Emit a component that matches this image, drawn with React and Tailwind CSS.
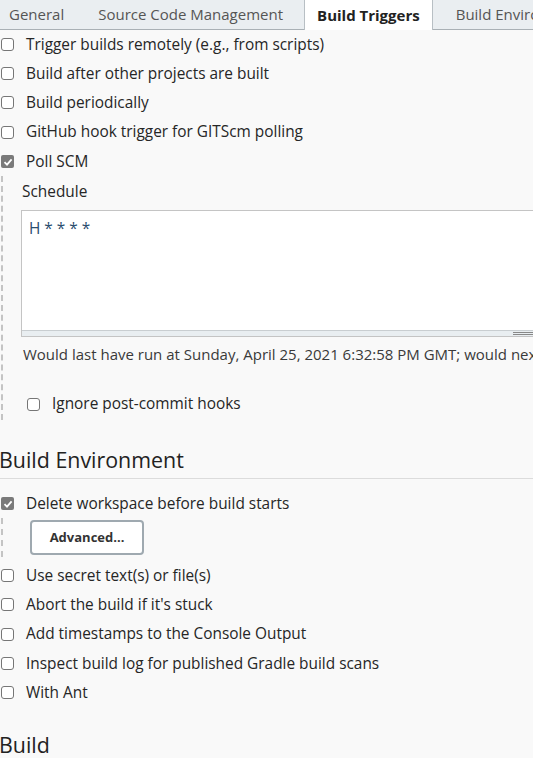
import React from "react";

function Box({ checked }) {
  if (checked) {
    return (
      <span className="inline-flex h-[13px] w-[13px] shrink-0 items-center justify-center rounded-[2px] bg-[#7a7a7a]">
        <svg width="10" height="10" viewBox="0 0 10 10">
          <path d="M1.5 5.2 L4 7.6 L8.6 2.4" fill="none" stroke="#fff" strokeWidth="1.8" />
        </svg>
      </span>
    );
  }
  return <span className="inline-block h-[13px] w-[13px] shrink-0 rounded-[3px] border border-[#767676] bg-white" />;
}

function Row({ checked, label, className = "" }) {
  return (
    <div className={"flex h-[29px] items-center gap-[12px] pl-[1px] " + className}>
      <Box checked={checked} />
      <span>{label}</span>
    </div>
  );
}

export default function App() {
  return (
    <div
      className="h-[758px] w-[533px] overflow-hidden bg-[#f9f9f9] text-[15.4px] text-[#262626]"
      style={{ fontFamily: '"Open Sans", "Noto Sans", sans-serif' }}
    >
      <div className="flex h-[30px] items-stretch border-b border-[#a9b0b5] bg-[#eaeef1] text-[15px] text-[#555] whitespace-nowrap">
        <div className="flex items-center pl-[9px] pr-[34px]">General</div>
        <div className="flex items-center pr-[21px]">Source Code Management</div>
        <div className="-mb-px flex items-center border-x border-[#b8bfc4] bg-white px-[12px] font-bold text-[#222]">
          Build Triggers
        </div>
        <div className="flex items-center pl-[23px]">Build Environment</div>
      </div>

      <div>
        <Row label="Trigger builds remotely (e.g., from scripts)" />
        <Row label="Build after other projects are built" />
        <Row label="Build periodically" />
        <Row label="GitHub hook trigger for GITScm polling" className="h-[30px]" />
        <Row checked label="Poll SCM" />

        <div className="ml-[1px] border-l-2 border-dashed border-[#c4c4c4] pb-[6px]">
          <div className="pl-[19px] pt-[6px] leading-[20px]">Schedule</div>
          <div className="ml-[18px] mt-[8px] flex h-[127px] flex-col border border-r-0 border-[#c4c4c4] bg-white">
            <div className="flex-1 px-[7px] pt-[6px] text-[15.4px] text-[#2a4d6e]">H * * * *</div>
            <div className="relative h-[6px] border-t border-[#c9ced1] bg-[#e9eef1]">
              <div className="absolute right-0 top-[1px] h-[1px] w-[20px] bg-[#888]" />
              <div className="absolute right-0 top-[3px] h-[1px] w-[20px] bg-[#888]" />
            </div>
          </div>
          <div className="mt-[7px] whitespace-nowrap pl-[20px] text-[15px] leading-[20px] text-[#3a3a3a]">
            Would last have run at Sunday, April 25, 2021 6:32:58 PM GMT; would next run at Sunday, April 25, 2021
          </div>
          <div className="mt-[30px] flex items-center gap-[12px] pl-[24px] leading-[20px]">
            <Box />
            <span>Ignore post-commit hooks</span>
          </div>
        </div>

        <div className="mt-[26px] -ml-[1px] border-b border-[#dcdcdc] pb-[4px] text-[21.4px] leading-[28px] text-[#222]">
          Build Environment
        </div>
        <div className="mt-[10px]">
          <Row checked label="Delete workspace before build starts" />
        </div>
        <div className="ml-[1px] border-l-2 border-dashed border-[#c4c4c4] py-[2px] pl-[27px]">
          <div className="flex h-[35px] w-[114px] items-center justify-center rounded-[4px] border-2 border-[#9fa9b0] bg-white text-[13px] font-bold text-[#333]">
            Advanced...
          </div>
        </div>
        <div className="mt-[4px]">
          <Row label="Use secret text(s) or file(s)" />
          <Row label="Abort the build if it's stuck" />
          <Row label="Add timestamps to the Console Output" className="h-[30px]" />
          <Row label="Inspect build log for published Gradle build scans" />
          <Row label="With Ant" />
        </div>
        <div className="mt-[24px] -ml-[1px] text-[21.4px] leading-[28px] text-[#222]">Build</div>
      </div>
    </div>
  );
}
